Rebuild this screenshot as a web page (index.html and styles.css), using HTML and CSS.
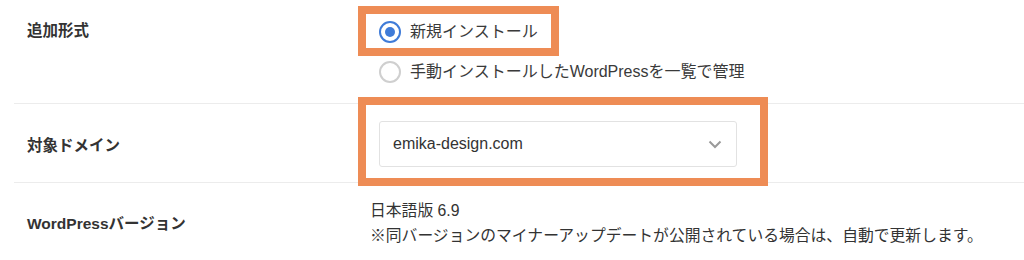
FILE: index.html
```html
<!DOCTYPE html>
<html lang="ja">
  <head>
    <meta charset="UTF-8" />
    <meta name="viewport" content="width=device-width, initial-scale=1.0" />
    <title>WordPress インストール設定</title>
    <link rel="stylesheet" href="styles.css">
  </head>
  <body>
    <div class="form">
      <div class="row row-top">
        <div class="label">追加形式</div>
        <div class="field">
          <div class="radios">
            <label class="radio mark mark-radio">
              <span class="dot checked"></span>
              <span>新規インストール</span>
            </label>
            <label class="radio">
              <span class="dot"></span>
              <span>手動インストールしたWordPressを一覧で管理</span>
            </label>
          </div>
        </div>
      </div>

      <div class="row">
        <div class="label">対象ドメイン</div>
        <div class="field">
          <div class="mark mark-select">
            <div class="select">
              <span>emika-design.com</span>
              <svg class="chevron" width="14" height="9" viewBox="0 0 14 9">
                <polyline points="1.5,1.5 7,7 12.5,1.5" fill="none" stroke="#9a9a9a" stroke-width="2" />
              </svg>
            </div>
          </div>
        </div>
      </div>

      <div class="row row-last">
        <div class="label">WordPressバージョン</div>
        <div class="field">
          <p class="text">日本語版 6.9</p>
          <p class="text">※同バージョンのマイナーアップデートが公開されている場合は、自動で更新します。</p>
        </div>
      </div>
    </div>
  </body>
</html>
```

FILE: styles.css
```css
body {
  font-family: "Liberation Sans", "Noto Sans CJK JP", sans-serif;
  margin: 0;
  color: #333;
  background: #fff;
}

.form {
  padding-left: 14px;
}

.row {
  display: grid;
  grid-template-columns: 365px 1fr;
  align-items: center;
  border-bottom: 1px solid #ececec;
  padding: 17px 0 15px;
}

.row-top {
  align-items: start;
  padding: 21px 0 20px;
}

.row-last {
  border-bottom: none;
  padding: 15px 0 20px;
}

.label {
  padding-left: 13px;
  font-size: 15.5px;
  font-weight: bold;
  color: #333;
}

.row-top .label {
  margin-top: -3px;
}

.row-last .label {
  margin-top: -3px;
}

.radios {
  display: flex;
  flex-direction: column;
  align-items: flex-start;
  gap: 18px;
}

.radio {
  display: flex;
  align-items: center;
  gap: 9px;
  font-size: 16px;
  color: #3a3a3a;
  line-height: 22px;
}

.dot {
  box-sizing: border-box;
  width: 22px;
  height: 22px;
  border-radius: 50%;
  border: 2px solid #cfcfcf;
  background: #fff;
  display: flex;
  align-items: center;
  justify-content: center;
}

.dot.checked {
  border: 2px solid #3f7bd8;
}

.dot.checked::after {
  content: "";
  width: 10px;
  height: 10px;
  border-radius: 50%;
  background: #3f7bd8;
}

/* orange annotation frames */
.mark {
  border: 8px solid #ee8c55;
}

.mark-radio {
  margin: -15px -21px -13px;
  padding: 7px 13px 5px;
}

.mark-select {
  width: fit-content;
  margin: -24px -31px -19px -21px;
  padding: 16px 23px 11px 13px;
}

.select {
  box-sizing: border-box;
  width: 358px;
  height: 46px;
  border: 1px solid #e2e2e2;
  border-radius: 3px;
  display: flex;
  align-items: center;
  justify-content: space-between;
  padding: 0 14px 0 13px;
  font-size: 16px;
  color: #333;
}

.text {
  margin: 0;
  font-size: 15.8px;
  line-height: 25px;
  color: #333;
  margin-left: -9px;
}
```
